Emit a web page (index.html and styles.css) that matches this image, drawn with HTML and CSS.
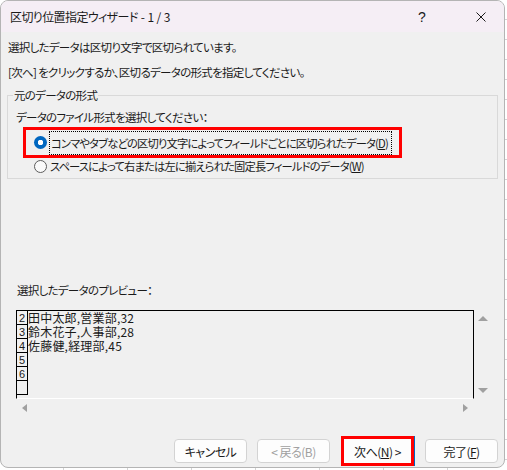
FILE: index.html
```html
<!DOCTYPE html>
<html lang="ja">
<head>
    <meta charset="UTF-8">
    <title>区切り位置指定ウィザード - 1 / 3</title>
    <link rel="stylesheet" href="styles.css">
</head>
<body>
    <div class="dialog">
        <div class="titlebar">
            <span class="title">区切り位置指定ウィザード - 1 / 3</span>
            <span class="help">?</span>
            <span class="close">
                <svg width="10" height="10" viewBox="0 0 10 10"><path d="M0.5 0.5L9.5 9.5M9.5 0.5L0.5 9.5" stroke="#1a1a1a" stroke-width="1"/></svg>
            </span>
        </div>

        <div class="content">
            <p class="intro">選択したデータは区切り文字で区切られています。</p>
            <p class="intro second">[次へ] をクリックするか、区切るデータの形式を指定してください。</p>

            <fieldset class="group">
                <legend>元のデータの形式</legend>
                <div class="prompt">データのファイル形式を選択してください：</div>
                <div class="highlight">
                    <label class="option">
                        <span class="radio checked"></span>
                        <span class="focus-text">コンマやタブなどの区切り文字によってフィールドごとに区切られたデータ(<u>D</u>)</span>
                    </label>
                </div>
                <label class="option second-option">
                    <span class="radio"></span>
                    <span>スペースによって右または左に揃えられた固定長フィールドのデータ(<u>W</u>)</span>
                </label>
            </fieldset>

            <div class="preview-label">選択したデータのプレビュー：</div>
            <div class="preview">
                <div class="preview-main">
                    <div class="preview-box">
                        <div class="row"><span class="num">2</span><span class="cell">田中太郎,営業部,32</span></div>
                        <div class="row"><span class="num">3</span><span class="cell">鈴木花子,人事部,28</span></div>
                        <div class="row"><span class="num">4</span><span class="cell">佐藤健,経理部,45</span></div>
                        <div class="row"><span class="num">5</span><span class="cell"></span></div>
                        <div class="row"><span class="num">6</span><span class="cell"></span></div>
                        <div class="row"><span class="num"></span><span class="cell"></span></div>
                    </div>
                    <div class="hscroll">
                        <span class="arrow left"></span>
                        <span class="arrow right"></span>
                    </div>
                </div>
                <div class="vscroll">
                    <span class="arrow up"></span>
                    <span class="arrow down"></span>
                </div>
            </div>

            <div class="buttons">
                <button class="btn">キャンセル</button>
                <button class="btn" disabled>&lt; 戻る(B)</button>
                <span class="btn-mark"><button class="btn">次へ(<u>N</u>) &gt;</button></span>
                <button class="btn">完了(<u>F</u>)</button>
            </div>
        </div>
    </div>
</body>
</html>
```

FILE: styles.css
```css
:root {
    --dialog-bg: #f0f0f0;
    --title-bg: #f5eef5;
    --text: #1a1a1a;
    --accent: #0067c0;
    --mark: #ff0000;
}

* {
    box-sizing: border-box;
    margin: 0;
    padding: 0;
}

body {
    width: 507px;
    height: 470px;
    overflow: hidden;
    font-family: "Noto Sans CJK JP", sans-serif;
    font-size: 11.5px;
    letter-spacing: -0.7px;
    color: var(--text);
    background-color: #ffffff;
    background-image: repeating-linear-gradient(90deg, transparent 0 63px, #d4d4d4 63px 64px),
                      repeating-linear-gradient(180deg, transparent 0 19px, #d4d4d4 19px 20px);
}

.dialog {
    width: 505px;
    height: 468px;
    background: var(--dialog-bg);
    border: 1px solid #b4b4b4;
    border-radius: 8px;
    overflow: hidden;
    display: flex;
    flex-direction: column;
}

.titlebar {
    height: 31px;
    flex: none;
    background: var(--title-bg);
    display: flex;
    align-items: center;
    padding-left: 9px;
}

.title {
    flex: 1;
    font-size: 12px;
    letter-spacing: -0.6px;
    word-spacing: 1px;
    font-feature-settings: "palt";
}

.help {
    width: 20px;
    text-align: center;
    font-family: "Liberation Sans", sans-serif;
    font-size: 14px;
    letter-spacing: 0;
    margin-right: 26px;
}

.close {
    width: 46px;
    height: 31px;
    display: flex;
    align-items: center;
    justify-content: center;
}

.content {
    flex: 1;
    padding: 0 6px;
    font-feature-settings: "palt";
}

.intro {
    line-height: 18px;
    margin-top: 6px;
    padding-left: 1px;
    white-space: nowrap;
}

.intro.second {
    margin-top: 7px;
}

.group {
    margin-top: 5px;
    border: 1px solid #d9d9d9;
    padding: 4px 8px 8px 8px;
    height: 93px;
}

.group legend {
    margin-left: -3px;
    padding: 0 1px;
    line-height: 18px;
}

.prompt {
    line-height: 18px;
}

.highlight {
    margin-top: 1px;
    margin-left: 7px;
    width: 379px;
    height: 31px;
    border: 3px solid var(--mark);
    padding-left: 8px;
    display: flex;
    align-items: center;
}

.option {
    display: flex;
    align-items: center;
    gap: 3px;
    line-height: 18px;
    font-size: 11.3px;
    letter-spacing: -0.85px;
    white-space: nowrap;
}

.second-option {
    margin-left: 18px;
    height: 16px;
}

.focus-text {
    outline: 1px dotted #000;
    outline-offset: 0;
    padding: 2px 3px 2px 1px;
}

.radio {
    width: 13px;
    height: 13px;
    border-radius: 50%;
    border: 1px solid #5c5c5c;
    background: #fafafa;
    flex: none;
}

.radio.checked {
    border: none;
    background: radial-gradient(circle, #ffffff 0 2.5px, var(--accent) 3px);
}

.preview-label {
    margin-top: 102px;
    padding-left: 10px;
    line-height: 18px;
}

.preview {
    margin-top: 11px;
    margin-left: 9px;
    display: flex;
}

.preview-main {
    width: 458px;
}

.preview-box {
    height: 89px;
    border: 1px solid #000;
    border-bottom-color: #ffffff;
    overflow: hidden;
    font-feature-settings: normal;
    letter-spacing: 0;
}

.row {
    display: flex;
    height: 14px;
    line-height: 14px;
}

.num {
    width: 11px;
    height: 14px;
    flex: none;
    border-right: 1px solid #000;
    border-bottom: 1px solid #000;
    font-family: "Liberation Sans", sans-serif;
    font-size: 11px;
    line-height: 13px;
    padding: 1px 0 0 2px;
}

.cell {
    font-size: 12px;
    letter-spacing: 0.2px;
    white-space: pre;
}

.hscroll {
    height: 17px;
    display: flex;
    align-items: center;
    justify-content: space-between;
    padding: 0 6px;
}

.vscroll {
    width: 17px;
    height: 88px;
    display: flex;
    flex-direction: column;
    justify-content: space-between;
    align-items: center;
    padding: 6px 0 5px;
}

.arrow {
    width: 0;
    height: 0;
    border: 4px solid transparent;
}

.arrow.left {
    border-right: 5px solid #a0a0a0;
    border-left: none;
}

.arrow.right {
    border-left: 5px solid #a0a0a0;
    border-right: none;
}

.arrow.up {
    border-bottom: 5px solid #a0a0a0;
    border-top: none;
    border-width: 0 5px 5px;
}

.arrow.down {
    border-top: 5px solid #a0a0a0;
    border-bottom: none;
    border-width: 5px 5px 0;
}

.buttons {
    margin-top: 20px;
    display: flex;
    justify-content: flex-end;
    align-items: center;
}

.btn {
    width: 73px;
    height: 24px;
    font-family: inherit;
    font-size: 12px;
    letter-spacing: -0.5px;
    font-feature-settings: "palt";
    color: var(--text);
    background: #fdfdfd;
    border: 1px solid #d3d3d3;
    border-radius: 4px;
    margin-left: 10px;
}

.btn:disabled {
    color: #a0a0a0;
}

.btn-mark {
    margin-left: 11px;
    border: 3px solid var(--mark);
    box-shadow: 1px 0 0 var(--accent);
    display: flex;
}

.btn-mark .btn {
    margin: 0;
    width: 67px;
    height: 24px;
    border: none;
    border-radius: 0;
    background: #fdfdfd;
}

.btn-mark + .btn {
    margin-left: 11px;
}
```
